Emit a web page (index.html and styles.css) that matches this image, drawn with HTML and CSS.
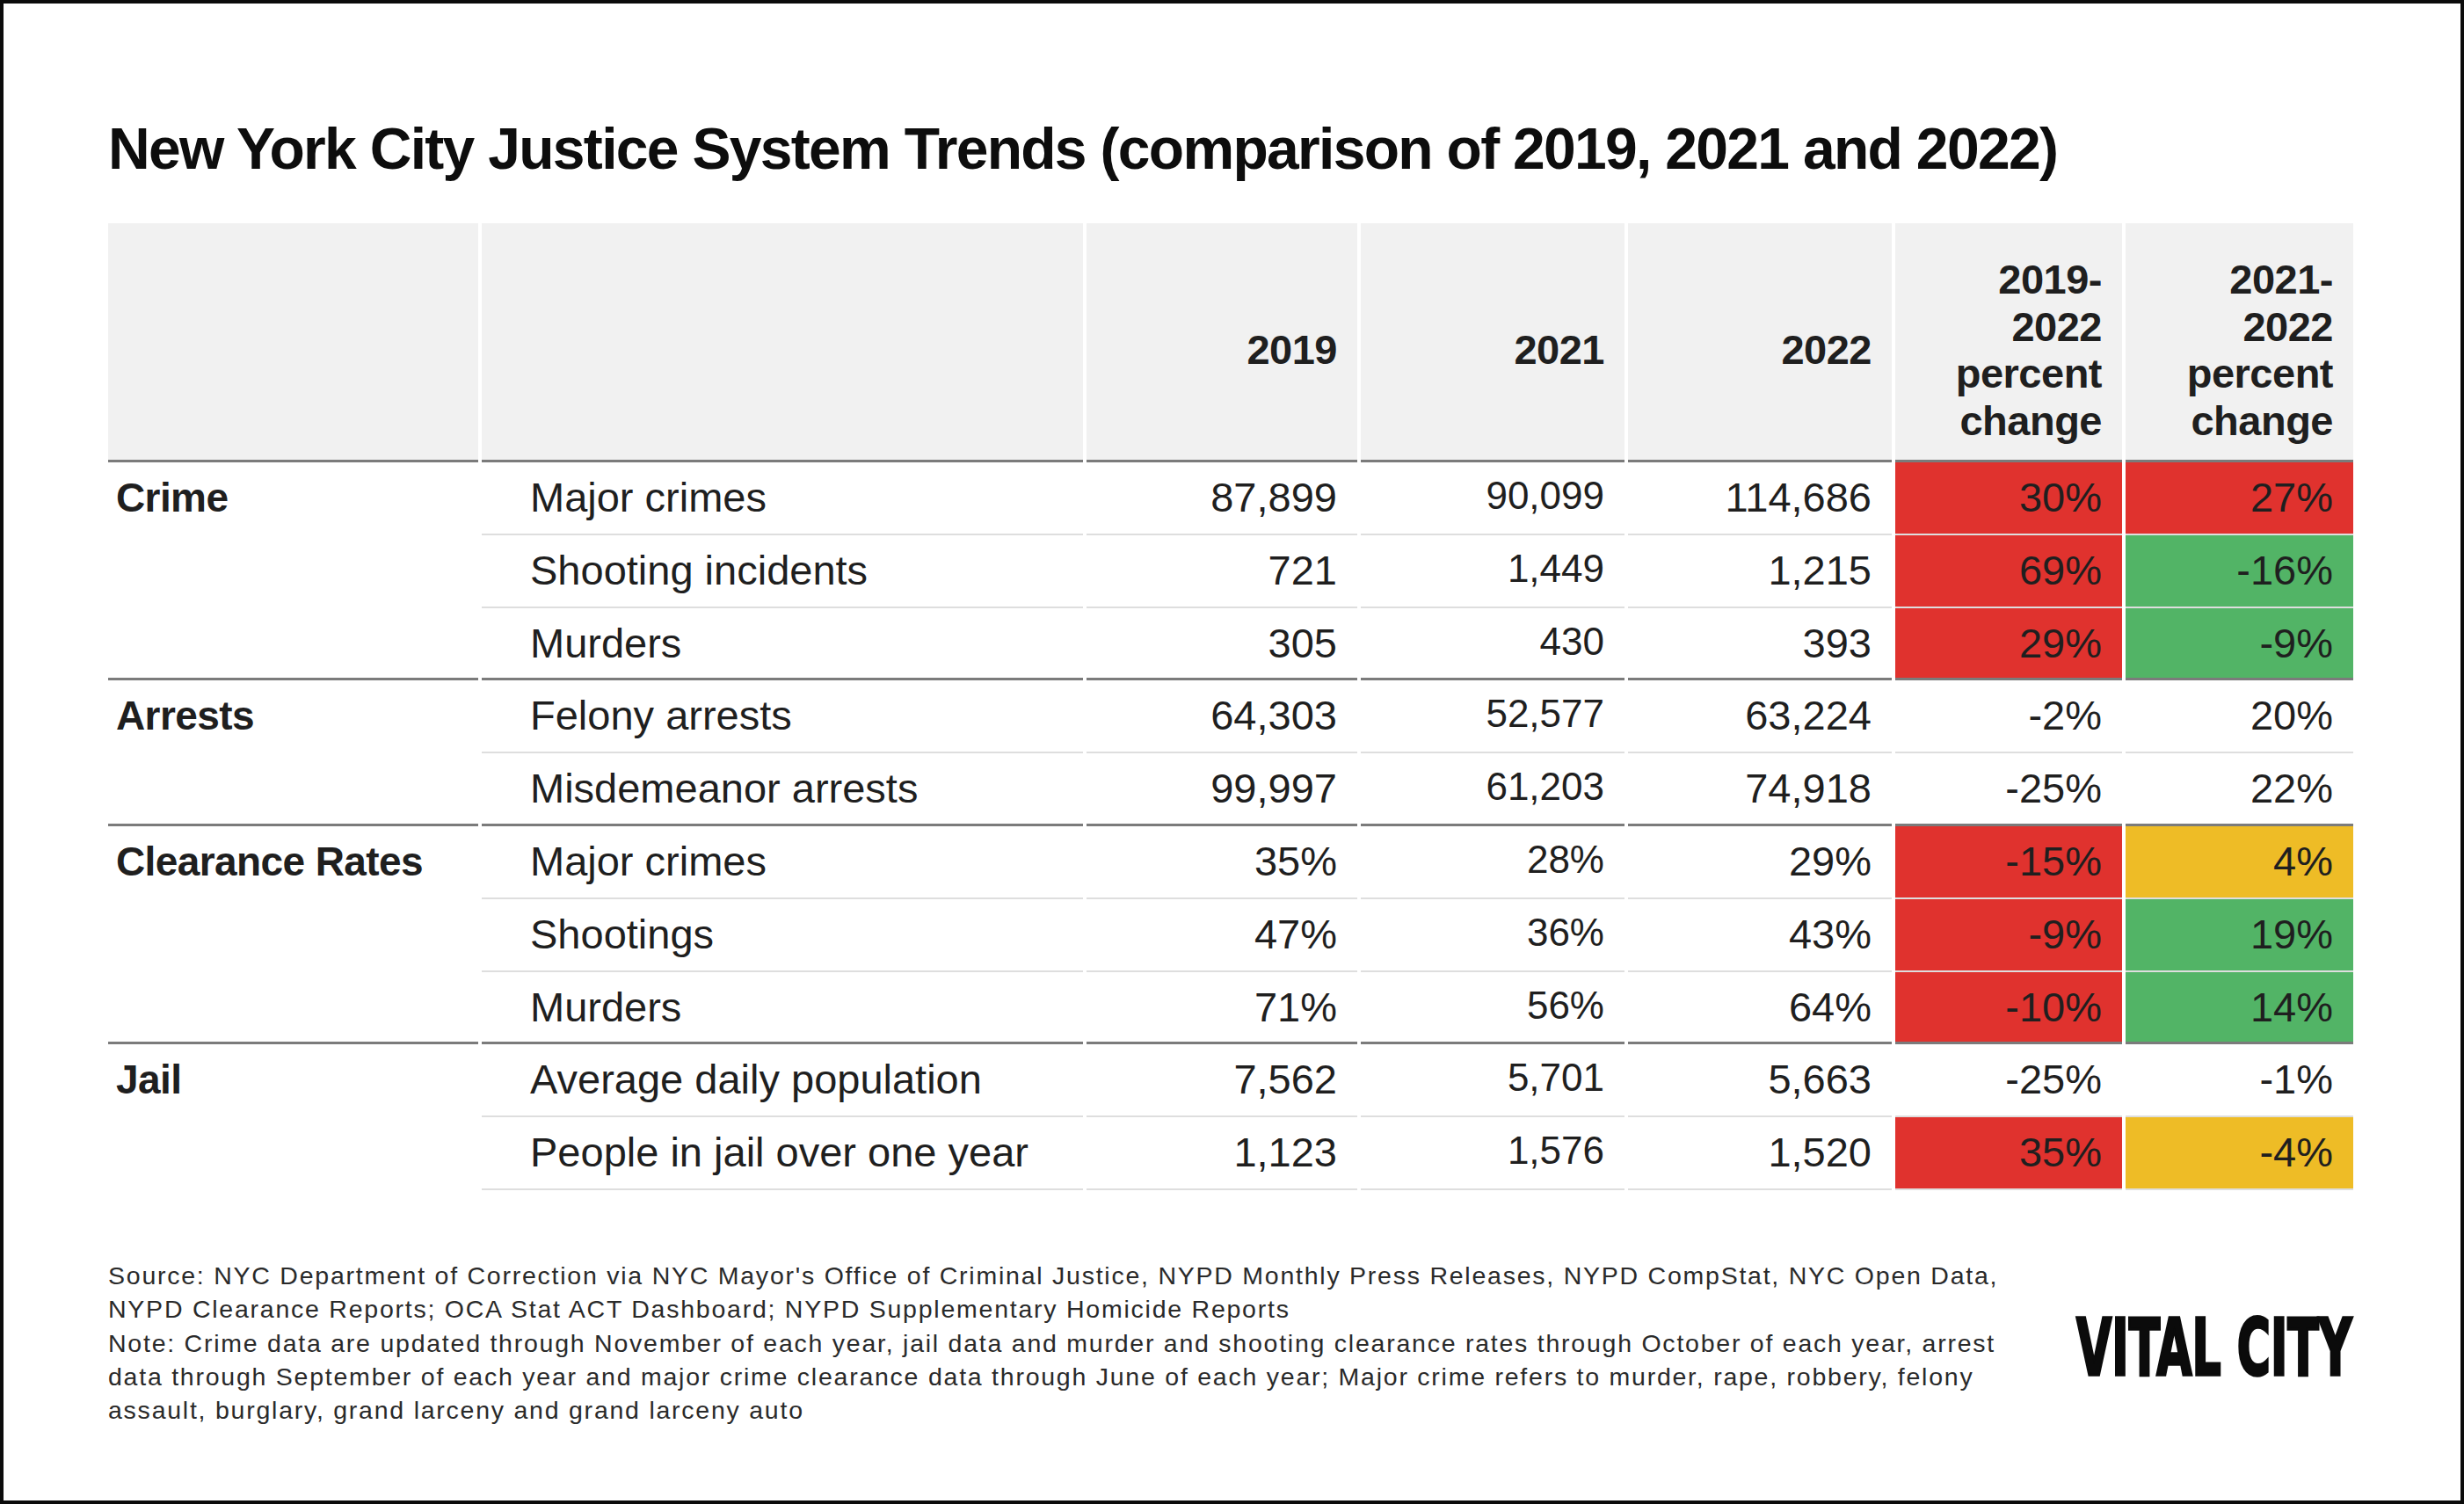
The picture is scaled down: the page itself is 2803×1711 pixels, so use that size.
FILE: index.html
```html
<!DOCTYPE html>
<html lang="en">
<head>
<meta charset="utf-8">
<title>New York City Justice System Trends</title>
<link rel="stylesheet" href="styles.css">
</head>
<body>
<div class="frame">
  <h1 class="title">New York City Justice System Trends (comparison of 2019, 2021 and 2022)</h1>
  <table class="trends">
    <colgroup>
      <col class="c-cat"><col class="c-metric"><col class="c-y19"><col class="c-y21"><col class="c-y22"><col class="c-p1"><col class="c-p2">
    </colgroup>
    <thead>
      <tr>
        <th></th>
        <th></th>
        <th class="num">2019</th>
        <th class="num">2021</th>
        <th class="num">2022</th>
        <th class="num">2019-<br>2022<br>percent<br>change</th>
        <th class="num">2021-<br>2022<br>percent<br>change</th>
      </tr>
    </thead>
    <tbody>
      <tr>
        <td class="cat">Crime</td><td class="metric">Major crimes</td>
        <td class="num">87,899</td><td class="num small">90,099</td><td class="num">114,686</td>
        <td class="num red">30%</td><td class="num red">27%</td>
      </tr>
      <tr>
        <td class="cat"></td><td class="metric">Shooting incidents</td>
        <td class="num">721</td><td class="num small">1,449</td><td class="num">1,215</td>
        <td class="num red">69%</td><td class="num green">-16%</td>
      </tr>
      <tr class="group-end">
        <td class="cat"></td><td class="metric">Murders</td>
        <td class="num">305</td><td class="num small">430</td><td class="num">393</td>
        <td class="num red">29%</td><td class="num green">-9%</td>
      </tr>
      <tr>
        <td class="cat">Arrests</td><td class="metric">Felony arrests</td>
        <td class="num">64,303</td><td class="num small">52,577</td><td class="num">63,224</td>
        <td class="num">-2%</td><td class="num">20%</td>
      </tr>
      <tr class="group-end">
        <td class="cat"></td><td class="metric">Misdemeanor arrests</td>
        <td class="num">99,997</td><td class="num small">61,203</td><td class="num">74,918</td>
        <td class="num">-25%</td><td class="num">22%</td>
      </tr>
      <tr>
        <td class="cat">Clearance Rates</td><td class="metric">Major crimes</td>
        <td class="num">35%</td><td class="num small">28%</td><td class="num">29%</td>
        <td class="num red">-15%</td><td class="num yellow">4%</td>
      </tr>
      <tr>
        <td class="cat"></td><td class="metric">Shootings</td>
        <td class="num">47%</td><td class="num small">36%</td><td class="num">43%</td>
        <td class="num red">-9%</td><td class="num green">19%</td>
      </tr>
      <tr class="group-end">
        <td class="cat"></td><td class="metric">Murders</td>
        <td class="num">71%</td><td class="num small">56%</td><td class="num">64%</td>
        <td class="num red">-10%</td><td class="num green">14%</td>
      </tr>
      <tr>
        <td class="cat">Jail</td><td class="metric">Average daily population</td>
        <td class="num">7,562</td><td class="num small">5,701</td><td class="num">5,663</td>
        <td class="num">-25%</td><td class="num">-1%</td>
      </tr>
      <tr>
        <td class="cat"></td><td class="metric">People in jail over one year</td>
        <td class="num">1,123</td><td class="num small">1,576</td><td class="num">1,520</td>
        <td class="num red">35%</td><td class="num yellow">-4%</td>
      </tr>
    </tbody>
  </table>
  <div class="footer">
    <div class="notes">
      <p>Source: NYC Department of Correction via NYC Mayor's Office of Criminal Justice, NYPD Monthly Press Releases, NYPD CompStat, NYC Open Data,<br>NYPD Clearance Reports; OCA Stat ACT Dashboard; NYPD Supplementary Homicide Reports</p>
      <p>Note: Crime data are updated through November of each year, jail data and murder and shooting clearance rates through October of each year, arrest<br>data through September of each year and major crime clearance data through June of each year; Major crime refers to murder, rape, robbery, felony<br>assault, burglary, grand larceny and grand larceny auto</p>
    </div>
    <div class="logo"><span class="logo-text">VITAL CITY</span></div>
  </div>
</div>
</body>
</html>
```

FILE: styles.css
```css
html, body {
  margin: 0;
  padding: 0;
  background: #ffffff;
}

.frame {
  box-sizing: border-box;
  width: 2803px;
  height: 1711px;
  border: 4px solid #0b0b0b;
  padding: 132px 0 0 119px;
  font-family: "Liberation Sans", Arial, sans-serif;
  color: #1f1f1f;
}

.title {
  margin: 0 0 52px 0;
  font-family: "Liberation Sans", Arial, sans-serif;
  font-weight: 700;
  font-size: 66px;
  line-height: 66px;
  letter-spacing: -1.7px;
  color: #0d0d0d;
  white-space: nowrap;
}

.trends {
  table-layout: fixed;
  border-collapse: separate;
  border-spacing: 4px 0;
  margin-left: -4px;
  width: 2562px;
}

.c-cat { width: 421px; }
.c-metric { width: 684px; }
.c-y19 { width: 308px; }
.c-y21 { width: 300px; }
.c-y22 { width: 300px; }
.c-p1 { width: 258px; }
.c-p2 { width: 259px; }

.trends th {
  background: #f1f1f1;
  font-weight: 700;
  font-size: 47px;
  line-height: 53.5px;
  letter-spacing: -0.5px;
  color: #1f1f1f;
  padding: 37px 23px 18px 23px;
  border-bottom: 3px solid #7b7b7b;
  vertical-align: middle;
  text-align: right;
}

.trends td {
  padding: 0 23px;
  font-size: 47px;
  line-height: 80.8px;
  border-bottom: 2px solid #dedede;
  vertical-align: middle;
  white-space: nowrap;
  color: #1f1f1f;
}

.trends td.num {
  text-align: right;
}

.trends td.small {
  font-size: 44px;
  line-height: 76.8px;
  padding-bottom: 4px;
}

.trends td.metric {
  padding-left: 55px;
  text-align: left;
}

.trends td.cat {
  padding-left: 9px;
  font-weight: 700;
  font-size: 46px;
  letter-spacing: -0.6px;
  border-bottom-color: transparent;
}

.trends tr.group-end td,
.trends tr.group-end td.cat {
  border-bottom: 3px solid #7b7b7b;
}

.trends tr.group-end td {
  line-height: 79.8px;
}

.trends tr.group-end td.small {
  line-height: 75.8px;
}

.red { background: #e0322e; }
.green { background: #52b466; }
.yellow { background: #eebc26; }

.footer {
  display: flex;
  align-items: center;
  justify-content: space-between;
  width: 2556px;
  margin-top: 78px;
}

.notes {
  font-family: "Liberation Sans", Arial, sans-serif;
  font-size: 28.5px;
  line-height: 38.3px;
  letter-spacing: 1.76px;
  color: #2a2a2a;
  white-space: nowrap;
}

.notes p {
  margin: 0;
}

.logo {
  width: 317px;
  height: 72px;
  margin-top: 10px;
  overflow: visible;
}

.logo-text {
  display: inline-block;
  font-family: "DejaVu Sans", "Liberation Sans", sans-serif;
  font-weight: 700;
  font-size: 89px;
  line-height: 72px;
  white-space: nowrap;
  color: #0b0b0b;
  -webkit-text-stroke: 3.5px #0b0b0b;
  transform: scaleX(0.585);
  transform-origin: 0 50%;
}
```
